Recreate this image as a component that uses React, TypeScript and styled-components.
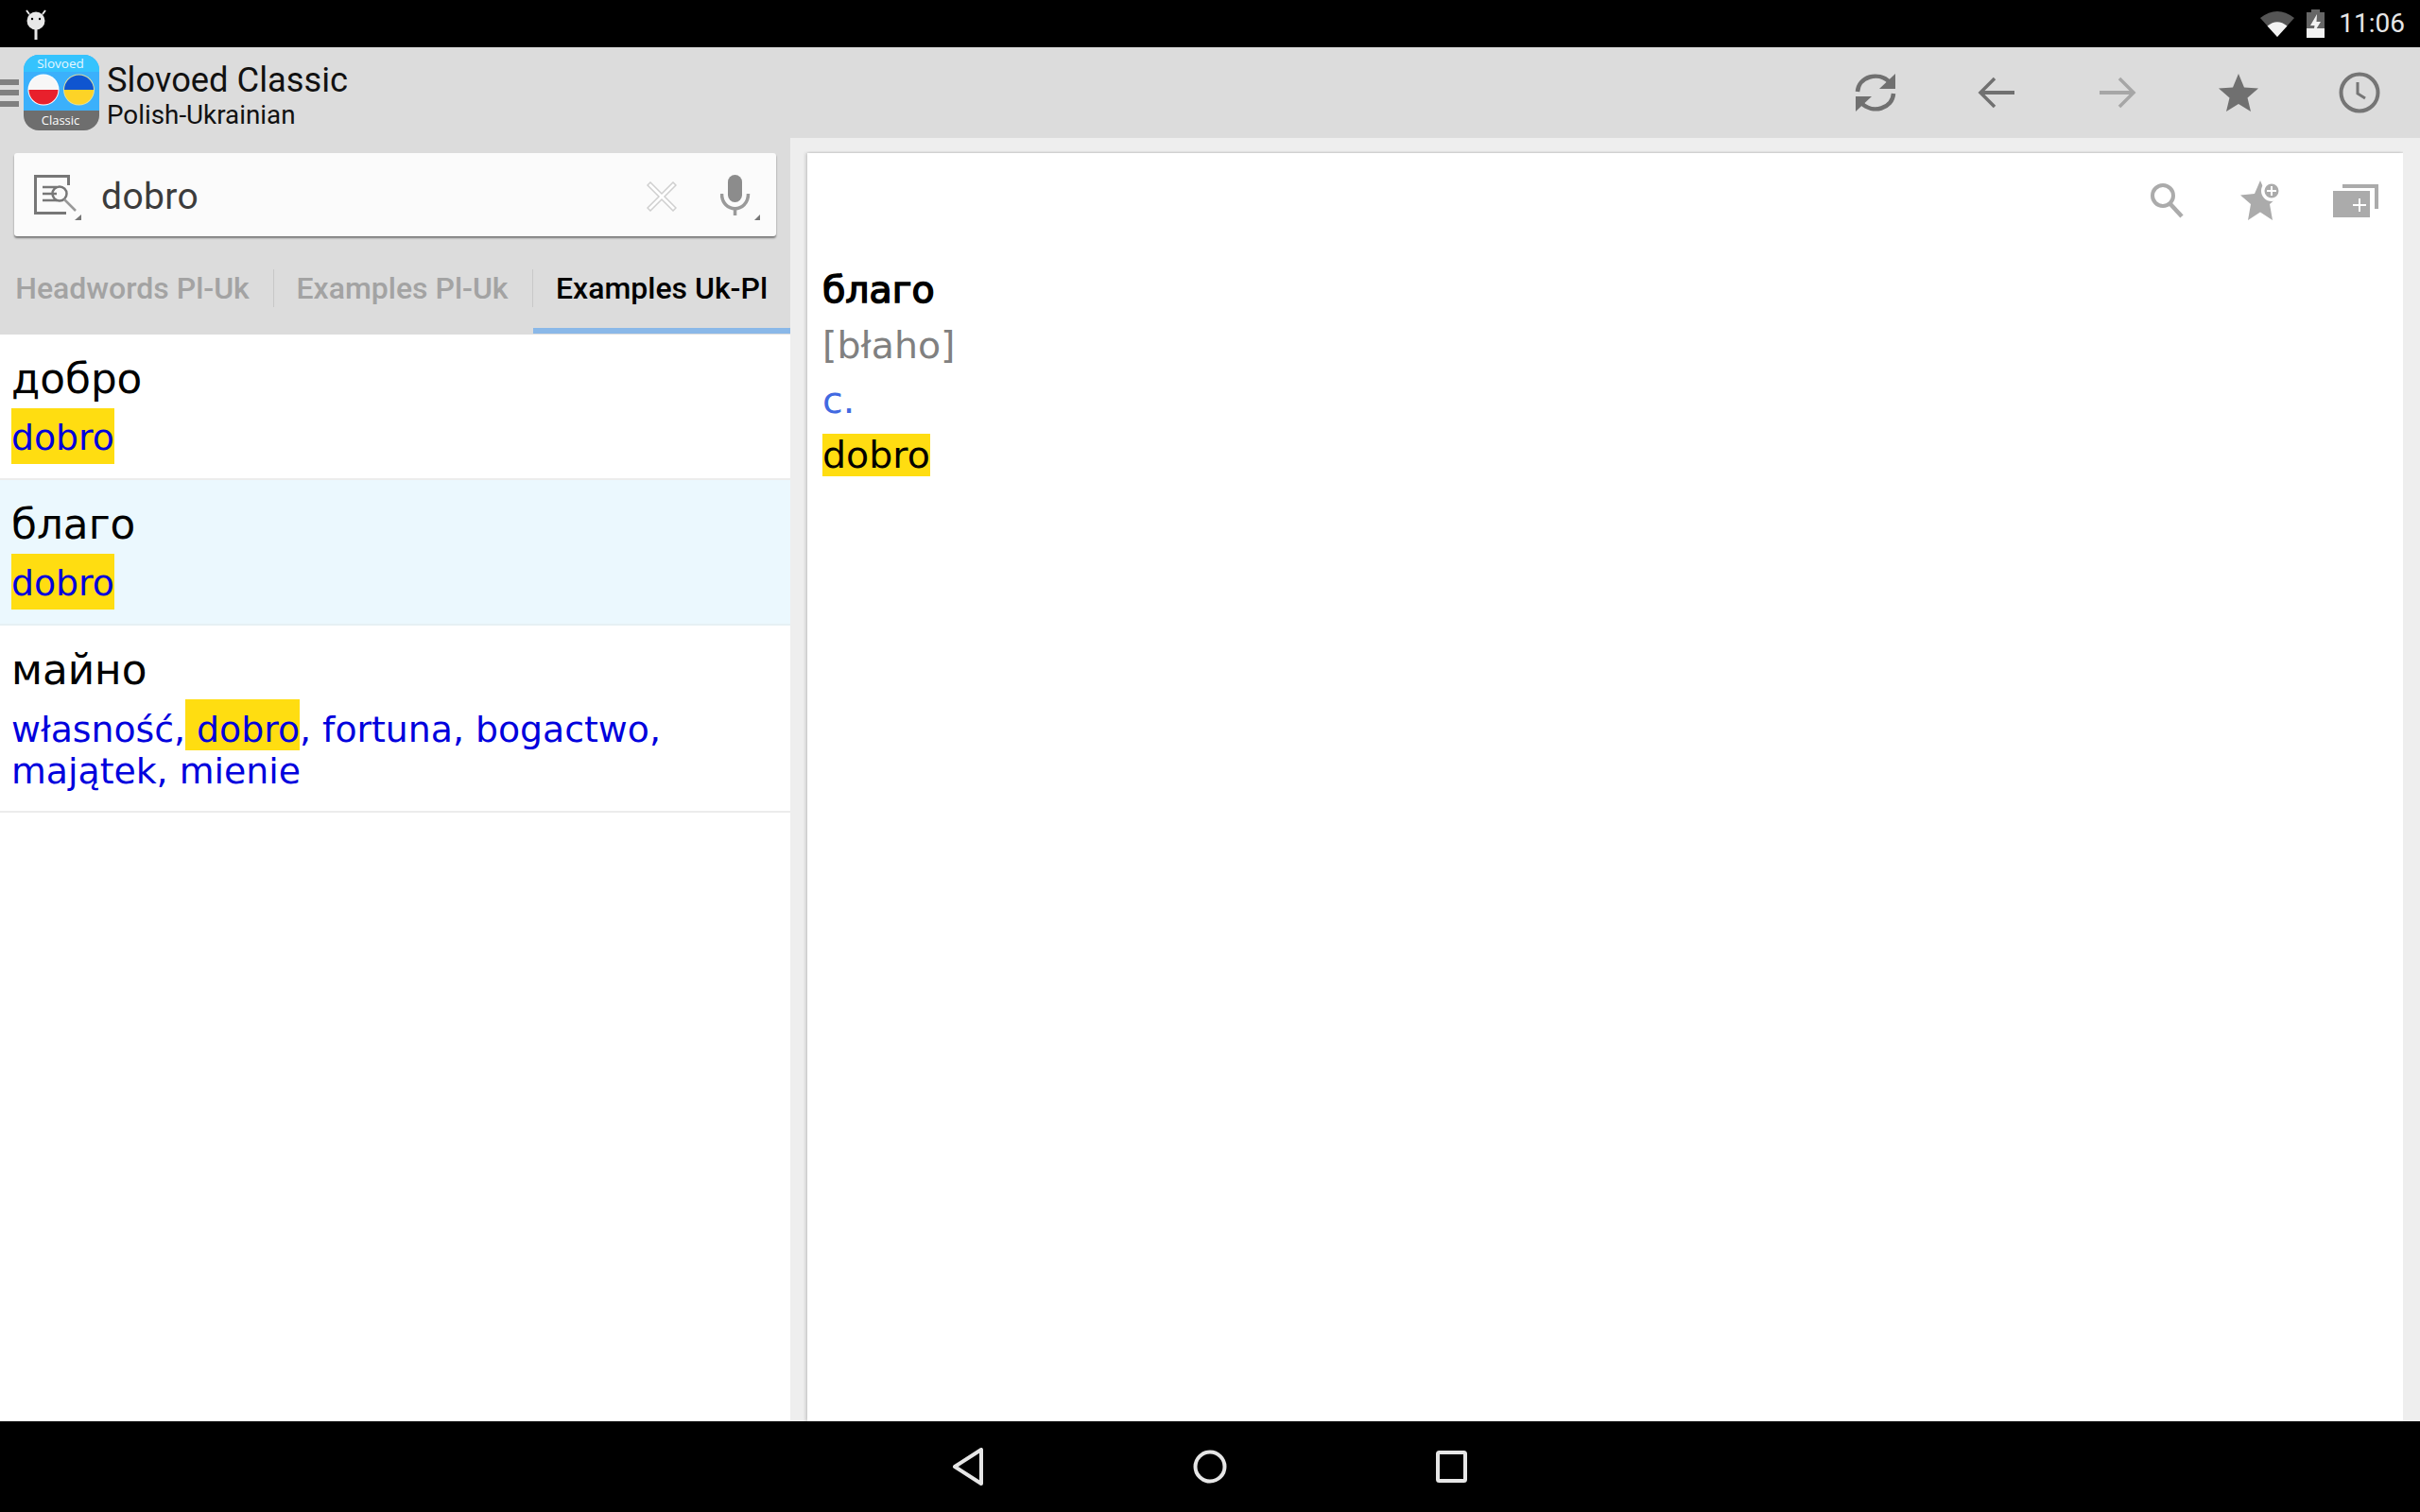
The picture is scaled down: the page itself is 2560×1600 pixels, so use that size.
import React from "react";
import styled, { createGlobalStyle } from "styled-components";

const Global = createGlobalStyle`
  html, body { margin: 0; padding: 0; background: #eeeeee; }
  #root { width: 2560px; height: 1600px; }
  * { box-sizing: border-box; }
`;

const Screen = styled.div`
  width: 2560px;
  height: 1600px;
  display: flex;
  flex-direction: column;
  overflow: hidden;
  font-family: "Roboto", "Liberation Sans", sans-serif;
  background: #eeeeee;
`;

const StatusBar = styled.div`
  height: 50px;
  flex: none;
  background: #000;
  display: flex;
  align-items: center;
  padding: 0 16px 0 26px;
`;
const StatusLeft = styled.div`
  flex: 1;
  display: flex;
`;
const StatusRight = styled.div`
  display: flex;
  align-items: center;
  gap: 13px;
`;
const Clock = styled.span`
  color: #e6e6e6;
  font-size: 28px;
  margin-left: 2px;
  line-height: 50px;
`;

const Toolbar = styled.div`
  height: 96px;
  flex: none;
  background: #dcdcdc;
  display: flex;
  align-items: center;
`;
const Hamburger = styled.div`
  width: 20px;
  height: 29px;
  margin-right: 5px;
  display: flex;
  flex-direction: column;
  justify-content: space-between;
`;
const HamburgerBar = styled.span`
  height: 6px;
  background: #808080;
`;
const TitleBlock = styled.div`
  margin-left: 8px;
  padding-top: 3px;
  flex: 1;
  display: flex;
  flex-direction: column;
`;
const AppTitle = styled.div`
  font-size: 36.3px;
  line-height: 44px;
  color: #111;
`;
const AppSubtitle = styled.div`
  font-size: 27.8px;
  line-height: 30px;
  color: #111;
`;
const ToolButton = styled.div`
  width: 128px;
  height: 96px;
  display: flex;
  align-items: center;
  justify-content: center;
`;

const Main = styled.div`
  flex: 1;
  min-height: 0;
  display: flex;
`;
const LeftPanel = styled.div`
  width: 836px;
  flex: none;
  display: flex;
  flex-direction: column;
  background: #fff;
`;
const SearchArea = styled.div`
  background: #dcdcdc;
  padding: 16px 15px 0;
`;
const SearchBox = styled.div`
  height: 88px;
  background: #fbfbfb;
  border-radius: 3px;
  box-shadow: 0 2px 2px rgba(0, 0, 0, 0.45);
  display: flex;
  align-items: center;
  padding: 0 17px 0 21px;
`;
const SearchText = styled.div`
  flex: 1;
  margin-left: 21px;
  margin-top: 3px;
  font-size: 39px;
  color: #3c3c3c;
  letter-spacing: 0.4px;
`;
const SearchSlot = styled.div<{ $mt: number; $ml?: number }>`
  display: flex;
  margin-top: ${(p) => p.$mt}px;
  margin-left: ${(p) => p.$ml ?? 0}px;
`;
const Tabs = styled.div`
  height: 104px;
  display: flex;
  margin: 0 -15px;
`;
const Tab = styled.div<{ $w: number; $shift?: number; $active?: boolean; $sep?: boolean }>`
  width: ${(p) => p.$w}px;
  height: 103px;
  flex: none;
  padding-top: 36px;
  padding-right: ${(p) => p.$shift ?? 0}px;
  text-align: center;
  font-size: 32px;
  line-height: 38px;
  font-weight: 500;
  white-space: nowrap;
  color: ${(p) => (p.$active ? "#000" : "#a3a3a3")};
  border-bottom: 6px solid ${(p) => (p.$active ? "#8ab8e8" : "transparent")};
  position: relative;
  &::after {
    content: "";
    display: ${(p) => (p.$sep ? "block" : "none")};
    position: absolute;
    right: 0;
    top: 35px;
    width: 1px;
    height: 40px;
    background: #c8c8c8;
  }
`;
const Row = styled.div<{ $sel?: boolean; $h: number }>`
  height: ${(p) => p.$h}px;
  flex: none;
  padding: 0 12px;
  background: ${(p) => (p.$sel ? "#ebf8fe" : "#fff")};
  border-bottom: 2px solid ${(p) => (p.$sel ? "#e6f0f4" : "#ececec")};
`;
const Headword = styled.div`
  font-family: "DejaVu Sans", sans-serif;
  font-size: 43.7px;
  line-height: 50px;
  padding-top: 22px;
  color: #000;
`;
const Trans = styled.div`
  font-family: "DejaVu Sans", sans-serif;
  font-size: 37.8px;
  line-height: 44px;
  margin-top: 6px;
  color: #0000dd;
  width: 760px;
`;
const Mark = styled.span<{ $h: number; $pt: number }>`
  display: inline-block;
  background: #ffdd11;
  height: ${(p) => p.$h}px;
  padding-top: ${(p) => p.$pt}px;
  line-height: 44px;
  vertical-align: bottom;
  white-space: pre;
`;

const Gutter = styled.div`
  width: 18px;
  flex: none;
  background: #eeeeee;
`;
const Card = styled.div`
  flex: 1;
  margin-top: 16px;
  background: #fff;
  box-shadow: -2px 0 3px rgba(0, 0, 0, 0.14), 0 -1px 2px rgba(0, 0, 0, 0.05), 2px 0 3px rgba(0, 0, 0, 0.1);
  display: flex;
  flex-direction: column;
  padding-left: 16px;
`;
const CardTools = styled.div`
  height: 115px;
  padding-bottom: 15px;
  display: flex;
  align-items: center;
  justify-content: flex-end;
`;
const CardTool = styled.div`
  width: 100px;
  height: 60px;
  display: flex;
  align-items: center;
  justify-content: center;
`;
const ArticleWord = styled.div`
  font-family: "DejaVu Sans", sans-serif;
  font-size: 39.5px;
  line-height: 58px;
  margin-bottom: 1px;
  color: #000;
  -webkit-text-stroke: 1.5px #000;
`;
const ArticleLine = styled.div<{ $color: string }>`
  font-family: "DejaVu Sans", sans-serif;
  font-size: 39.5px;
  line-height: 58px;
  color: ${(p) => p.$color};
`;
const ArticleMark = styled.span`
  background: #ffdd11;
  display: inline-block;
  line-height: 45px;
  height: 45px;
`;

const NavBar = styled.div`
  height: 96px;
  flex: none;
  background: #000;
  display: flex;
  align-items: center;
  justify-content: center;
`;
const NavItem = styled.div`
  width: 256px;
  display: flex;
  justify-content: center;
`;

const Svg = styled.svg`
  display: block;
  flex: none;
`;

const AndroidIcon = () => (
  <Svg width="24" height="36" viewBox="0 0 24 36">
    <circle cx="12" cy="15" r="9.500" fill="#e8e8e8" />
    <path d="M5 8 L2 4 M19 8 L22 4" stroke="#e8e8e8" strokeWidth="2" />
    <rect x="10.500" y="23" width="3" height="12" fill="#e8e8e8" />
    <circle cx="8" cy="13" r="1.200" fill="#000" />
    <circle cx="16" cy="13" r="1.200" fill="#000" />
  </Svg>
);
const WifiIcon = () => (
  <Svg width="36" height="30" viewBox="0 0 36 30">
    <path d="M0 9 Q18 -5 36 9 L18 29 Z" fill="#555" />
    <path d="M7.500 17.500 Q18 9 28.500 17.500 L18 29 Z" fill="#f2f2f2" />
  </Svg>
);
const BatteryIcon = () => (
  <Svg width="19" height="30" viewBox="0 0 19 30">
    <path d="M5 3 V0 H14 V3 H19 V30 H0 V3 Z" fill="#666" />
    <rect x="0" y="20" width="19" height="10" fill="#f2f2f2" />
    <path d="M11 5 L4 17 H8.500 L7 26 L15 13 H10.500 Z" fill="#f2f2f2" />
  </Svg>
);

const LogoIcon = () => (
  <Svg width="80" height="80" viewBox="0 0 80 80">
    <defs>
      <clipPath id="logoClip">
        <rect width="80" height="80" rx="16" />
      </clipPath>
      <clipPath id="flagL">
        <circle cx="21" cy="37" r="15.500" />
      </clipPath>
      <clipPath id="flagR">
        <circle cx="58.500" cy="37" r="15.500" />
      </clipPath>
    </defs>
    <g clipPath="url(#logoClip)">
      <rect width="80" height="59" fill="#3bb0fb" />
      <rect width="80" height="18" fill="#35c3fd" />
      <rect y="59" width="80" height="21" fill="#6e6e6e" />
      <text x="39" y="14" textAnchor="middle" fontFamily="Open Sans, sans-serif" fontSize="13.500" fill="#e6f7ff">Slovoed</text>
      <text x="39" y="74" textAnchor="middle" fontFamily="Open Sans, sans-serif" fontSize="13" fill="#fff">Classic</text>
      <circle cx="21" cy="37" r="16.500" fill="#fff" />
      <circle cx="58.500" cy="37" r="16.500" fill="#e0e0a0" />
      <g clipPath="url(#flagL)">
        <rect x="5" y="21" width="33" height="16" fill="#f7f7f7" />
        <rect x="5" y="37" width="33" height="17" fill="#e8202c" />
      </g>
      <g clipPath="url(#flagR)">
        <rect x="42" y="21" width="34" height="16" fill="#0f55d0" />
        <rect x="42" y="37" width="34" height="17" fill="#fdd327" />
      </g>
    </g>
  </Svg>
);

const RefreshIcon = () => (
  <Svg width="46" height="44" viewBox="0 0 46 44" fill="none">
    <path d="M4 21 C5 5 26 -1 38 11" stroke="#707070" strokeWidth="4.500" />
    <path d="M44 2 V18 H27 Z" fill="#707070" />
    <path d="M42 23 C41 39 20 45 8 33" stroke="#707070" strokeWidth="4.500" />
    <path d="M2 42 V26 H19 Z" fill="#707070" />
  </Svg>
);
const ArrowIcon = ({ dir, color }: { dir: "l" | "r"; color: string }) => (
  <Svg width="40" height="34" viewBox="0 0 40 34" fill="none">
    <g transform={dir === "r" ? "translate(40 0) scale(-1 1)" : undefined}>
      <path d="M18 2 L3 17 L18 32" stroke={color} strokeWidth="3.500" />
      <path d="M3 17 H39" stroke={color} strokeWidth="4" />
    </g>
  </Svg>
);
const StarIcon = () => (
  <Svg width="42" height="40" viewBox="0 0 42 40">
    <path d="M21 0 L27 14.500 L42 15.500 L30.500 25.500 L34 40 L21 32 L8 40 L11.500 25.500 L0 15.500 L15 14.500 Z" fill="#707070" />
  </Svg>
);
const ClockIcon = () => (
  <Svg width="44" height="44" viewBox="0 0 44 44" fill="none">
    <circle cx="22" cy="22" r="19.500" stroke="#757575" strokeWidth="4" />
    <path d="M20 11 V23 L28 28" stroke="#757575" strokeWidth="3" />
  </Svg>
);

const DictIcon = () => (
  <Svg width="50" height="48" viewBox="0 0 50 48" fill="none">
    <path d="M38 1.500 H1.500 V40.500 H34" stroke="#777" strokeWidth="3" />
    <path d="M36.500 1.500 V11" stroke="#777" strokeWidth="3" />
    <circle cx="27" cy="20" r="7.500" stroke="#777" strokeWidth="2.500" />
    <path d="M32 26 L44 38" stroke="#999" strokeWidth="2.500" />
    <path d="M9 13 H24 M9 20 H24 M9 27 H24" stroke="#777" strokeWidth="2.500" />
    <path d="M50 42 V48 H43 Z" fill="#777" />
  </Svg>
);
const ClearIcon = () => (
  <Svg width="32" height="32" viewBox="0 0 32 32">
    <path d="M4 1 L16 13 L28 1 L31 4 L19 16 L31 28 L28 31 L16 19 L4 31 L1 28 L13 16 L1 4 Z" fill="#fff" stroke="#cfcfcf" strokeWidth="1.500" />
  </Svg>
);
const MicIcon = () => (
  <Svg width="42" height="48" viewBox="0 0 42 48" fill="none">
    <rect x="8" y="0" width="15" height="29" rx="7.500" fill="#8c8c8c" />
    <path d="M1.500 20 C1.500 41 29.500 41 29.500 20" stroke="#9a9a9a" strokeWidth="3.500" />
    <rect x="13.800" y="34" width="3.500" height="9" fill="#9a9a9a" />
    <path d="M42 42 V48 H36 Z" fill="#777" />
  </Svg>
);

const SearchSmallIcon = () => (
  <Svg width="36" height="38" viewBox="0 0 36 38" fill="none">
    <circle cx="14" cy="14" r="11" stroke="#ababab" strokeWidth="4" />
    <path d="M22 23 L34 36" stroke="#ababab" strokeWidth="4.500" />
  </Svg>
);
const StarPlusIcon = () => (
  <Svg width="44" height="42" viewBox="0 0 44 42">
    <path d="M21 0 L27 14 L42 15.500 L31 25 L34 42 L21 33.500 L8 42 L11 25 L0 15.500 L15 14 Z" fill="#ababab" />
    <circle cx="33" cy="11" r="11" fill="#fff" />
    <circle cx="33" cy="11" r="7.500" fill="#ababab" />
    <path d="M33 6 V16 M28 11 H38" stroke="#fff" strokeWidth="2" />
  </Svg>
);
const TabsIcon = () => (
  <Svg width="48" height="36" viewBox="0 0 48 36" fill="none">
    <path d="M10 3 H46 V27" stroke="#ababab" strokeWidth="4" />
    <rect x="0" y="8" width="39" height="28" fill="#ababab" />
    <path d="M28 16 V30 M21 23 H35" stroke="#fff" strokeWidth="2" />
  </Svg>
);

const NavBack = () => (
  <Svg width="34" height="40" viewBox="0 0 34 40" fill="none">
    <path d="M31 2 V38 L3 20 Z" stroke="#e6e6e6" strokeWidth="4" strokeLinejoin="round" />
  </Svg>
);
const NavHome = () => (
  <Svg width="36" height="36" viewBox="0 0 36 36" fill="none">
    <circle cx="18" cy="18" r="15.500" stroke="#e6e6e6" strokeWidth="4" />
  </Svg>
);
const NavRecent = () => (
  <Svg width="34" height="34" viewBox="0 0 34 34" fill="none">
    <rect x="2" y="2" width="29" height="30" rx="1.500" stroke="#e6e6e6" strokeWidth="4" />
  </Svg>
);

export default function App() {
  return (
    <Screen>
      <Global />
      <StatusBar>
        <StatusLeft>
          <AndroidIcon />
        </StatusLeft>
        <StatusRight>
          <WifiIcon />
          <BatteryIcon />
          <Clock>11:06</Clock>
        </StatusRight>
      </StatusBar>
      <Toolbar>
        <Hamburger>
          <HamburgerBar />
          <HamburgerBar />
          <HamburgerBar />
        </Hamburger>
        <LogoIcon />
        <TitleBlock>
          <AppTitle>Slovoed Classic</AppTitle>
          <AppSubtitle>Polish-Ukrainian</AppSubtitle>
        </TitleBlock>
        <ToolButton><RefreshIcon /></ToolButton>
        <ToolButton><ArrowIcon dir="l" color="#707070" /></ToolButton>
        <ToolButton><ArrowIcon dir="r" color="#a6a6a6" /></ToolButton>
        <ToolButton><StarIcon /></ToolButton>
        <ToolButton><ClockIcon /></ToolButton>
      </Toolbar>
      <Main>
        <LeftPanel>
          <SearchArea>
            <SearchBox>
              <SearchSlot $mt={6}><DictIcon /></SearchSlot>
              <SearchText>dobro</SearchText>
              <SearchSlot $mt={4}><ClearIcon /></SearchSlot>
              <SearchSlot $mt={6} $ml={46}><MicIcon /></SearchSlot>
            </SearchBox>
            <Tabs>
              <Tab $w={290} $shift={10} $sep>Headwords Pl-Uk</Tab>
              <Tab $w={274} $shift={3} $sep>Examples Pl-Uk</Tab>
              <Tab $w={272} $active>Examples Uk-Pl</Tab>
            </Tabs>
          </SearchArea>
          <Row $h={154}>
            <Headword>добро</Headword>
            <Trans><Mark $h={59} $pt={9}>dobro</Mark></Trans>
          </Row>
          <Row $h={154} $sel>
            <Headword>благо</Headword>
            <Trans><Mark $h={59} $pt={9}>dobro</Mark></Trans>
          </Row>
          <Row $h={198}>
            <Headword>майно</Headword>
            <Trans>
              <span>własność,</span>
              <Mark $h={54} $pt={10}> dobro</Mark>
              <span>, fortuna, bogactwo, </span>
              <span>majątek, mienie</span>
            </Trans>
          </Row>
        </LeftPanel>
        <Gutter />
        <Card>
          <CardTools>
            <CardTool><SearchSmallIcon /></CardTool>
            <CardTool><StarPlusIcon /></CardTool>
            <CardTool><TabsIcon /></CardTool>
          </CardTools>
          <ArticleWord>благо</ArticleWord>
          <ArticleLine $color="#808080">[błaho]</ArticleLine>
          <ArticleLine $color="#4169e1">с.</ArticleLine>
          <ArticleLine $color="#000"><ArticleMark>dobro</ArticleMark></ArticleLine>
        </Card>
        <Gutter />
      </Main>
      <NavBar>
        <NavItem><NavBack /></NavItem>
        <NavItem><NavHome /></NavItem>
        <NavItem><NavRecent /></NavItem>
      </NavBar>
    </Screen>
  );
}
